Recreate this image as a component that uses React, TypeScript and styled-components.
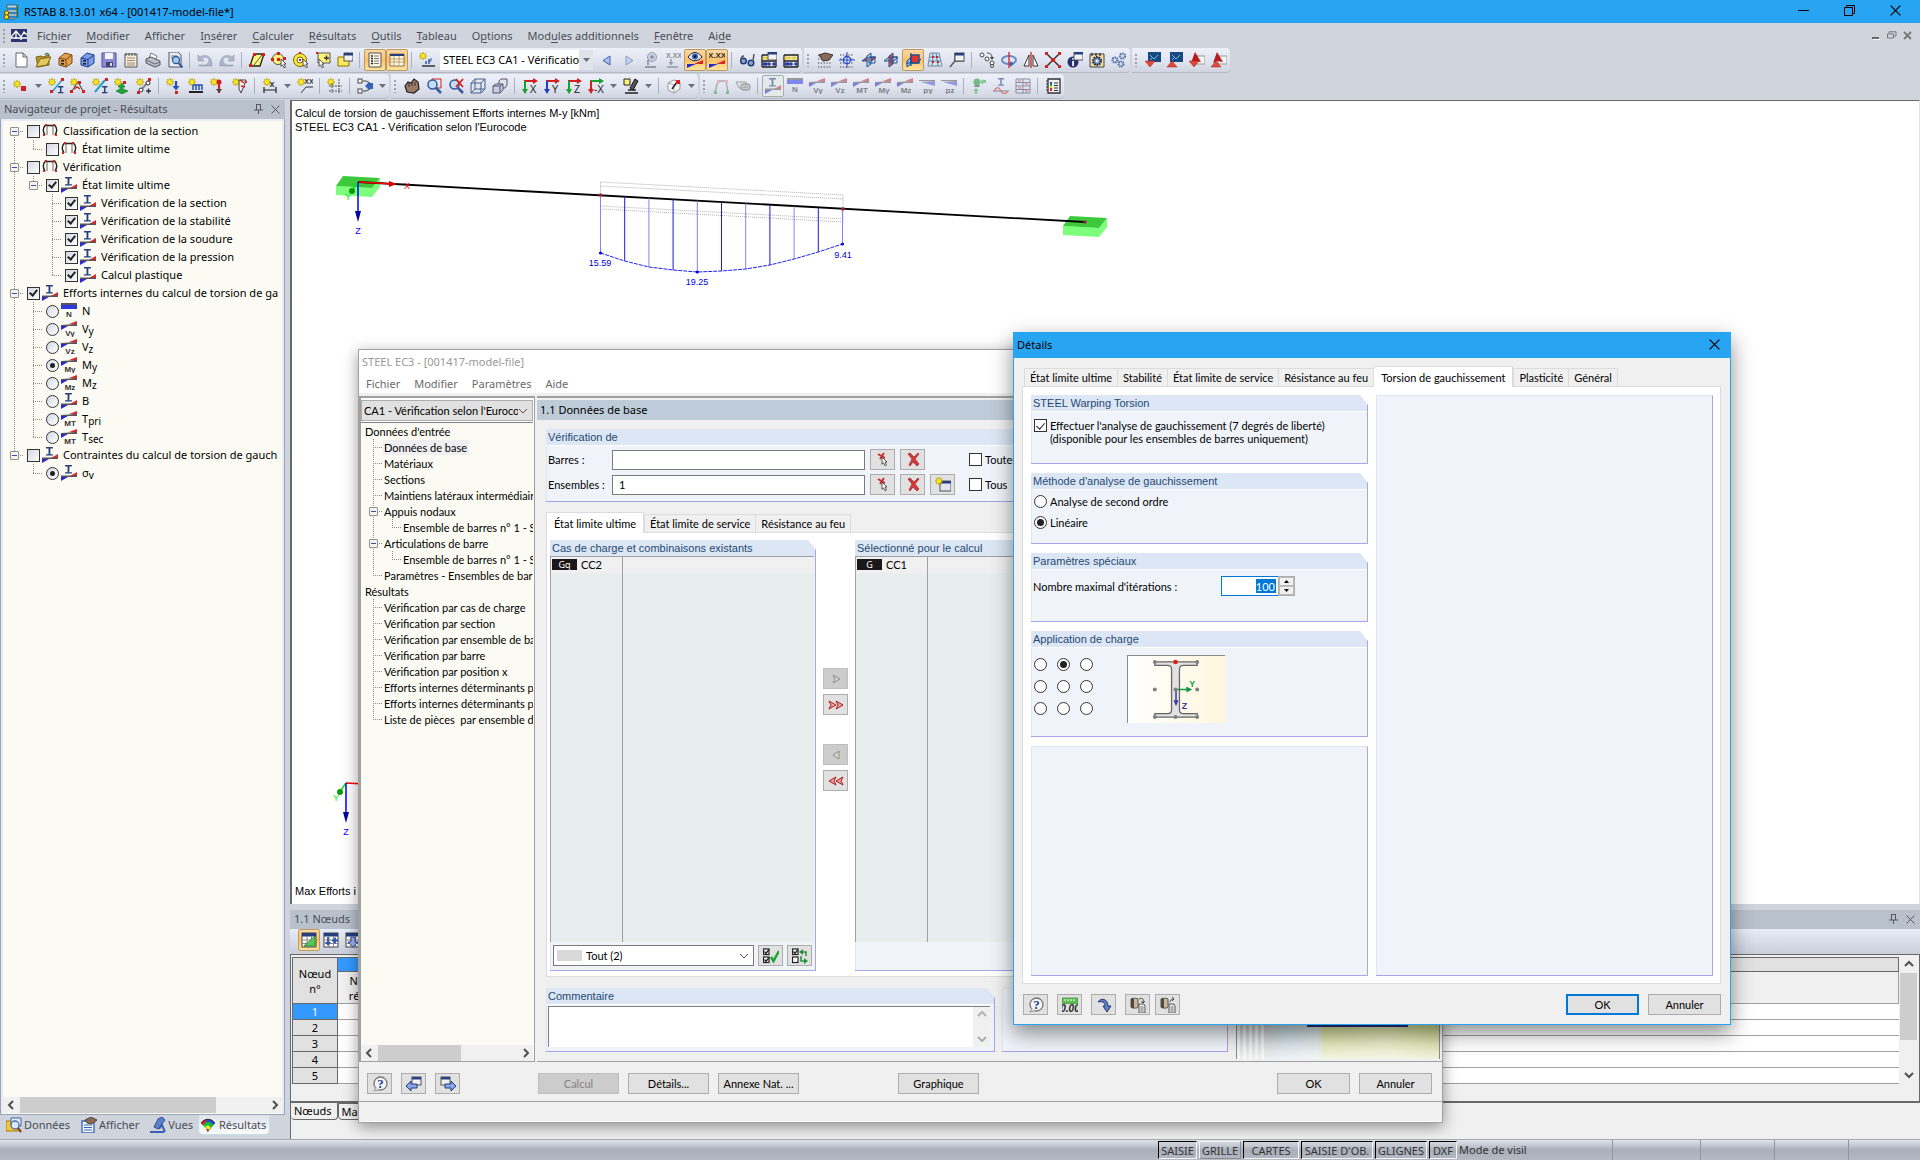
import React, { ReactNode } from "react";
import styled, { createGlobalStyle, css } from "styled-components";

const UI = `"Noto Sans", "Open Sans", sans-serif`;
const DLG = `Lato, Roboto, sans-serif`;
const ARIAL = `"Liberation Sans", Arial, sans-serif`;

const Global = createGlobalStyle`
  *, *::before, *::after { box-sizing: border-box; }
  html, body { margin: 0; height: 100%; overflow: hidden; }
  body { font: 11px/16px ${UI}; color: #000; background: #cfd4dd; }
  button, input, select, textarea { font: inherit; color: inherit; margin: 0; padding: 0; border-radius: 0; }
  ul { list-style: none; margin: 0; padding: 0; }
  p, h1, h2, h3 { margin: 0; font-size: inherit; font-weight: inherit; }
`;

/* ---------- icons ---------- */

const burst = (x: number, y: number, r = 4) => {
  const pts: string[] = [];
  for (let i = 0; i < 16; i++) {
    const k = i % 2 ? r * 0.5 : r;
    const a = (i * Math.PI) / 8;
    pts.push(`${(x + k * Math.cos(a)).toFixed(2)},${(y + k * Math.sin(a)).toFixed(2)}`);
  }
  return <polygon points={pts.join(" ")} fill="#ffee1e" stroke="#b59a00" strokeWidth="0.6" />;
};
const red = "#d42020";
const navy = "#26407e";
const dot = (x: number, y: number, c = red, s = 3) => <rect x={x} y={y} width={s} height={s} fill={c} />;
const line = (d: string, c = "#333", w = 1.3) => <path d={d} fill="none" stroke={c} strokeWidth={w} />;
const cursor = (x: number, y: number) => (
  <path d={`M${x} ${y}l5 5h-2l1.500 3-1.500 .8-1.500-3-1.500 1.500z`} fill="#fff" stroke="#444" strokeWidth="0.9" />
);
const ibeam = (x: number, y: number, s = 1) => (
  <path d={`M${x} ${y}h${6 * s}v1.400h-${2.2 * s}v${5 * s}h${2.2 * s}v1.400h-${6 * s}v-1.400h${2.2 * s}v-${5 * s}h-${2.2 * s}z`} fill={navy} />
);
const label = (t: string, x = 9, y = 15, size = 8) => (
  <text x={x} y={y} fontSize={size} fontFamily="Liberation Sans, sans-serif" fontWeight="700" textAnchor="middle" fill="#333">{t}</text>
);
const wedge = (
  <>
    <path d="M8 3L16 0v4z" fill="#d8282c" />
    <path d="M0 4l16-1v2H0z" fill="#5a5458" />
    <path d="M0 5h7L0 9z" fill="#2a2ad0" />
  </>
);
const force = (t: string) => <>{wedge}{label(t)}</>;
const beamResult = <>{ibeam(4, 0, 1.15)}<path d="M9 11l7-4v4z" fill="#d8282c" /><path d="M0 10.500h16V12H0z" fill="#5a5458" /><path d="M0 12h7l-7 4z" fill="#2a2ad0" /></>;
const drawer = (c: string, d: string) => (
  <><path d="M2 6l6-5 7 2v8l-6 4-7-2z" fill={c} stroke={d} /><path d="M2 6l7 1.500 6-4.500M9 7.500V15" fill="none" stroke={d} /><rect x="4" y="8" width="3" height="1.600" fill="#222" /><rect x="4" y="11" width="3" height="1.600" fill="#222" /></>
);
const planes = (a: string, b: string) => (
  <><path d="M1 9l5-4h9l-4 4z" fill={a} stroke="#23508c" /><path d="M6 4l4-3v11l-4 3z" fill={b} fillOpacity=".85" stroke="#23508c" /><path d="M8 5h6v6H8z" fill="none" stroke="#23508c" /></>
);
const axes = (t: string, a: string, b: string) => (
  <>{line("M2 3h10", a, 2)}<path d="M11 0l5 3-5 3z" fill={a} />{line("M3 3v9", b, 2)}<path d="M0 11l3 5 3-5z" fill={b} />
    <text x="11" y="15" fontSize="10" textAnchor="middle" fontFamily="Liberation Sans, sans-serif" fill="#222">{t}</text></>
);
const dots = <path d="M1 3h14M1 7h14M1 11h14M1 15h14" stroke="#444" strokeWidth="1.2" strokeDasharray="1.300 1.500" />;
const abacus = <><path d="M1 3h14v12M1 3v12M1 9h14M1 15h14" fill="none" stroke="#222" strokeWidth="1.3" /><g fill="#e8d020">{[3, 6, 10, 12].map((x) => <circle key={x} cx={x} cy="6" r="1.6" />)}</g><g fill="#2c3c9c">{[3, 5, 8, 13].map((x) => <circle key={x} cx={x} cy="12" r="1.8" />)}</g></>;
const supports = <>{line("M3 12C1 9 1 5 3 2.500h10c2 2.500 2 6.500 0 9.500", "#222", 1.400)}{line("M5 3v9M11 3v9", "#666", 1)}{dot(3, 1, red, 2)}{dot(11, 1, red, 2)}{dot(1, 11, red, 2)}{dot(13, 11, red, 2)}</>;
const question = <><circle cx="8.500" cy="7.500" r="6.500" fill="#f4f4f6" stroke="#777" strokeWidth="1.300" /><path d="M4 11l-2 4 6-1.500" fill="#ddd" stroke="#888" strokeWidth=".8" /><text x="8.500" y="12" fontSize="13" fontWeight="700" textAnchor="middle" fontFamily="Liberation Serif, serif" fill="#24408c">?</text></>;
const grid = <><rect x="1" y="1" width="14" height="14" fill="#fff" stroke="#444" /><rect x="1" y="1" width="14" height="3.500" fill={navy} /><path d="M1 8h14M1 11.500h14M6 4v11M10.500 4v11" stroke="#888" /></>;
const cad = (up: boolean) => <><rect x="3" y="0" width="13" height="10" fill="#164a80" /><path d="M5 3l4 4 4-4M5 8l3-3" stroke="#7cc0f0" fill="none" /><path d={up ? "M0 15l5-6 5 6z" : "M0 9h10l-5 6z"} fill="#e0483c" stroke="#a02020" strokeWidth=".5" /></>;
const scia = (up: boolean) => <><path d="M7 4h9v8H7z" fill="#f4f4f4" stroke="#999" /><path d="M6 0l6 10-6-1-4 2z" fill="#b81c1c" /><path d={up ? "M0 15l5-6 5 6z" : "M0 9h10l-5 6z"} fill="#e0483c" stroke="#a02020" strokeWidth=".5" /></>;
const winIcon = (x: number, y: number) => <><rect x={x} y={y} width="9" height="8" fill="#f2f2f4" stroke="#555" /><rect x={x} y={y} width="9" height="2.500" fill={navy} /></>;
const jar = (up: boolean) => <><path d="M1 2c0-1 7-1 7 0v8c0 1.500-7 1.500-7 0z" fill="#c8b89c" stroke="#5a5048" /><path d="M1 2c0-1 3-1 3 0v9c-1 0-3 0-3-1z" fill="#54483e" /><path d="M9 7h5l1 2v7H9z" fill="#eee" stroke="#555" /><path d="M10.500 10h3M10.500 12h3M10.500 14h3" stroke="#666" />{line(up ? "M10 5c0-3 4-3 4-3M12 0l2 2-2 2" : "M9 2c4-2 5 1 4 4M11 4l2 2 2-2", "#444", 1)}</>;

const ICONS: Record<string, ReactNode> = {
  new: <path d="M3 1h7l4 4v10H3zM10 1v4h4" fill="#fff" stroke="#666" />,
  open: <><path d="M1 5l5-1 2 1 6-2v10L3 15z" fill="#b8952c" stroke="#7c6414" /><path d="M1 15l4-8 11-2-4 8z" fill="#e4c860" stroke="#7c6414" />{line("M10 3c1-2 3-2 4 0", "#3a7a3a")}</>,
  "open-model": drawer("#e0a050", "#7a4a10"),
  "save-model": drawer("#7c9ce8", "#203c90"),
  save: <><path d="M1 1h14v14H1z" fill="#8c8cd4" stroke="#50509c" /><path d="M4 1h8v6H4z" fill="#f4f4f8" /><path d="M5 10h7v5H5z" fill="#444470" /><rect x="9" y="11" width="2" height="3" fill="#ddd" /></>,
  report: <><path d="M2 2h12v13H2z" fill="#f4f0e0" stroke="#555" />{line("M3 1v3M6 1v3M9 1v3M12 1v3", "#555", 1)}{line("M4 6h8M4 8.500h8M4 11h8M4 13h8", "#a08868", 1)}</>,
  print: <><path d="M4 6l2-5 6 3-2 5z" fill="#fff" stroke="#777" /><path d="M1 7l5-2 9 4v4l-5 2-9-4z" fill="#b8c0cc" stroke="#555" /><path d="M1 8l9 4 5-2" fill="none" stroke="#666" /></>,
  preview: <><path d="M2 0h9l3 3v12H2z" fill="#e8ecf4" stroke="#555" />{line("M4 4h6M4 6h3", "#777", 1)}<circle cx="9" cy="8" r="3.500" fill="#a8ccf0" stroke="#345a9c" strokeWidth="1.300" />{line("M11.500 11l4 4.500", "#345a9c", 2)}</>,
  undo: <g opacity=".6"><path d="M1 3v6h6L5 7c3-3 7-2 7 1 0 2-1 3-3 5h-7v1h13c1-9-6-13-12-9z" fill="#8c9ab4" stroke="#5c6c88" strokeWidth=".6" /></g>,
  redo: <g opacity=".6"><path d="M15 3v6H9l2-2C8 4 4 5 4 8c0 2 1 3 3 5h7v1H1C0 5 7 1 13 5z" fill="#8c9ab4" stroke="#5c6c88" strokeWidth=".6" /></g>,
  "sel-rhomb": <><path d="M5 2h10l-4 12H1z" fill="#fff27a" stroke="#222" strokeWidth="1.300" />{line("M5 13L13 3", "#555", 1)}{dot(4, 1)}{dot(13, 1)}{dot(0, 12)}</>,
  "sel-circle": <><circle cx="7" cy="7" r="5.500" fill="#fff27a" stroke="#555" />{dot(6, 0)}{dot(0, 6)}{dot(12, 5)}{dot(6, 6)}{cursor(10, 7)}</>,
  "sel-ring": <><circle cx="7" cy="8" r="6.500" fill="#ffe838" stroke="#7a6a00" /><circle cx="7" cy="8" r="3" fill="#fff" stroke="#7a6a00" />{dot(6, 7, red, 2)}{dot(6, 0, red, 2)}{cursor(10, 7)}</>,
  "sel-rect": <><path d="M3 1h12v10H3z" fill="#fff27a" stroke="#555" />{dot(1, 0, red, 2)}{line("M9 6h5M11.500 3.500v5", "#333")}{cursor(4, 7)}</>,
  "sel-win": <><path d="M1 5h11v9H1z" fill="#ffe95c" stroke="#8a7800" />{winIcon(7, 1)}</>,
  list: <><path d="M2 1h12v14H2z" fill="#fdf6e4" stroke="#555" />{line("M4 4h2M4 6.500h2M4 9h2M4 11.500h2", "#222", 1.500)}{line("M7 4h5M7 6.500h5M7 9h5M7 11.500h5", "#777", 1)}</>,
  table: <><path d="M1 2h14v12H1z" fill="#fff8ea" stroke="#8c7448" /><path d="M1 2h14v2H1z" fill={navy} />{line("M1 7h14M1 10h14M5 4v10M10 4v10", "#c09c60", 1)}</>,
  "new-load": <>{burst(4, 4)}{line("M10 7v5M7 9v3", "#3a5aa8", 1.500)}{line("M12 6v3h-3", "#3a5aa8", 1)}{line("M3 14h13", "#333", 1.500)}</>,
  prev: <path d="M11 4v9L4 8.500z" fill="#a8c0ec" stroke="#4460a8" />,
  next: <path d="M5 4v9l7-4.500z" fill="#c4d4f0" stroke="#8c9cc8" />,
  "eye-gray": <g opacity=".5"><circle cx="9" cy="5" r="4.500" fill="#a8b8d8" stroke="#556" /><circle cx="9" cy="5" r="1.800" fill="#334" />{line("M5 8v5M2 15h11", "#556", 2)}</g>,
  "xxx-gray": <g opacity=".5">{label("X.XX", 9, 6, 7)}{line("M6 7v5M2 15h11", "#556", 1.500)}<path d="M3.500 10h5L6 13.500z" fill="#556" /></g>,
  eye: <><path d="M1 5c4-6 10-6 14 0-4 5-10 5-14 0z" fill="#dce8f8" stroke="#223" /><circle cx="8" cy="4.500" r="3" fill="#345cb0" /><circle cx="8" cy="4.500" r="1.200" fill="#111" /><path d="M7 12l9-4v4z" fill="#d8282c" /><path d="M0 12h9l-9 4z" fill="#2a2ad0" /></>,
  xxx: <>{label("X.XX", 8, 6, 8)}<path d="M7 12l9-4v4z" fill="#d8282c" /><path d="M0 12h9l-9 4z" fill="#2a2ad0" /></>,
  glasses: <><circle cx="4.500" cy="9" r="2.800" fill="#8ca4d4" stroke="#223a78" strokeWidth="1.500" /><circle cx="12" cy="11" r="2.800" fill="#8ca4d4" stroke="#223a78" strokeWidth="1.500" />{line("M2 8c0-3 1-4 3-4M14 9l1-7", "#556", 1.500)}</>,
  "abacus-win": <>{abacus}{winIcon(7, 0)}</>,
  abacus,
  "hand-grid": <>{dots}<path d="M2 3l6-2 8 2-4 5-6 1z" fill="#8c6a58" stroke="#333" /></>,
  snap: <>{dots}<circle cx="8" cy="8" r="3.500" fill="#e8ecf8" stroke="#2a4ac0" strokeWidth="1.300" />{line("M8 0v16M0 8h16", "#2a4ac0", 1)}</>,
  "plane-xy": planes("#e04040", "#a8d0f0"),
  "plane-yz": planes("#a8d0f0", "#e04040"),
  "plane-xz": <><path d="M2 9l4-4v7l-4 3z" fill="#7cc0f0" stroke="#23508c" /><path d="M6 3h8v8H6z" fill="#e83030" stroke="#23508c" strokeWidth="1.500" /><path d="M1 11h11l4-4M6 1v13" fill="none" stroke="#23508c" strokeWidth="1.200" /></>,
  mesh: <><path d="M3 1h9l3 13H1z" fill="#cfe4f4" stroke="#7a8a98" />{line("M2 5h11M2 9h12M6 1L5 14M9 1l2 13", "#5a88a8", 1)}{dot(5, 4, red, 2)}{dot(9, 4, red, 2)}{dot(5, 9, red, 2)}{dot(10, 9, red, 2)}</>,
  "axis-win": <>{line("M1 15l5-6V1M6 9h9", "#556", 1.500)}{winIcon(6, 1)}</>,
  move: <><circle cx="3" cy="3" r="2" fill="#fff" stroke="#444" /><circle cx="8" cy="7" r="2" fill="#fff" stroke="#444" />{line("M8 1c4 0 5 2 5 5", "#444", 1)}<path d="M11 5h4l-2 3z" fill="#444" /><circle cx="13" cy="11" r="2" fill="#fff" stroke="#444" /><circle cx="13" cy="14" r="1.500" fill="#fff" stroke="#444" /></>,
  rotate: <><ellipse cx="8" cy="8" rx="7" ry="4" fill="none" stroke="#6c88c8" strokeWidth="2" />{line("M8 0v16", red, 1.300)}<path d="M9 9l4 3-4 3z" fill="#4464b0" /></>,
  mirror: <><path d="M6 3v11H1zM10 3v11h5z" fill="#fff" stroke="#333" />{line("M8 0v16", red, 1.300)}</>,
  cross: <>{line("M2 2l12 12M14 2L2 14", "#333", 1.500)}{dot(0, 0)}{dot(13, 0)}{dot(0, 13)}{dot(13, 13)}{dot(6, 6, red, 4)}</>,
  info: <><circle cx="6" cy="10" r="5.500" fill="#26306c" /><path d="M5.200 9h1.800v5H5.200zM5.200 6h1.800v1.800H5.200z" fill="#fff" />{winIcon(7, 0)}</>,
  settings: <><path d="M1 2h14v13H1z" fill="#f0dca8" stroke="#444" />{line("M3 1v3M7 1v3M11 1v3", "#333")}<circle cx="8" cy="9" r="4" fill="#6484b4" stroke="#223" strokeDasharray="1.500 1" strokeWidth="2" /><circle cx="8" cy="9" r="1.500" fill="#fff" /></>,
  gears: <g fill="none" stroke="#5070a8" strokeWidth="2.200" strokeDasharray="1.500 .7"><circle cx="4" cy="8" r="2.500" /><circle cx="11.500" cy="4" r="2.500" /><circle cx="10" cy="12" r="2.500" /></g>,
  "cad-in": cad(false), "cad-out": cad(true), "scia-in": scia(false), "scia-out": scia(true),
  node: <>{burst(4, 6)}{dot(8, 8, red, 5)}</>,
  member: <>{line("M4 14L14 2", "#26a0c8", 1.500)}{burst(4, 4)}{dot(2, 12)}{dot(13, 0)}{ibeam(10, 8, 0.9)}</>,
  "member-set": <>{line("M2 13L8 4l5 9", "#555", 1.200)}{burst(4, 4)}{dot(8, 3)}{dot(0, 12)}{dot(12, 12)}{line("M4 11l3-2 3 2", red, 1.500)}</>,
  "member-i": <>{line("M3 14L13 2", "#26a0c8", 2)}{burst(4, 4)}{dot(13, 0)}{ibeam(10, 8, 0.9)}</>,
  support: <><path d="M8 5l3 4H9v2l5 2-6 3-6-3 4-2V9H4z" fill="#1ca838" stroke="#0c6c20" strokeWidth=".6" />{burst(4, 4)}{dot(9, 3)}</>,
  release: <>{line("M4 13L13 3", "#888", 2)}{burst(4, 4)}<circle cx="12" cy="5" r="2" fill="#fff" stroke="#333" /><circle cx="5" cy="12" r="2" fill="#fff" stroke="#333" />{line("M10 13h5M12.500 10.500v5", "#333")}{dot(12, 0)}{dot(1, 13)}</>,
  "load-node": <>{burst(4, 4)}{line("M10 3v6", "#2850b0", 2.200)}<path d="M6.500 8h7L10 12.500z" fill="#2850b0" />{dot(9, 13)}</>,
  "load-mem": <>{burst(4, 4)}{line("M5 7h9v5M8 7v5M11 7v5M5 7v5", "#2850b0", 1.500)}{line("M1 14h14", "#222", 2)}</>,
  "load-imp": <>{burst(4, 4)}<circle cx="9" cy="4" r="2.500" fill={red} />{line("M9 6v9", red, 2.200)}<path d="M6 11h6l-3 4z" fill="#444" /></>,
  "load-def": <>{burst(4, 4)}<path d="M7 2h7l-2 6-3 7-2-4z" fill="#eee" stroke="#444" />{line("M8 2l4 3M9 8l4 1", red, 1.500)}{dot(13, 3, red, 2)}</>,
  dim: <>{burst(5, 4)}{line("M2 9v6M14 9v6M2 12h12", "#222", 1.200)}{label("x", 10, 9, 9)}</>,
  comment: <>{burst(4, 4)}{label("XX", 12, 6, 7)}{line("M4 15L9 9h7", "#333", 1)}</>,
  guide: <>{burst(4, 4)}<path d="M5 5v10M12 1v14M2 8h13M2 13h13" stroke="#555" strokeWidth="1" strokeDasharray="2 1" /></>,
  select: <><rect x="1" y="1" width="4" height="4" fill="#fff" stroke="#444" /><rect x="1" y="11" width="4" height="4" fill="#fff" stroke="#444" />{line("M6 3h3l4 2M6 13h3l4-2", "#444", 1)}<path d="M8 8l4-4v8z" fill="#3464b8" /><rect x="12" y="5" width="4" height="6" fill="#3464b8" /></>,
  pan: <><path d="M3 14l-2-6 3-4 3 1 3-4 4 3 1 7-5 4z" fill="#9c7c68" stroke="#222" strokeWidth="1.200" />{line("M5 5v4M8 4v4M11 4v4", "#333", 1)}</>,
  zoom: <><path d="M6 1h9v9H6z" fill="none" stroke={red} /><circle cx="6.500" cy="6.500" r="4.500" fill="#c4dcf4" stroke="#345a9c" strokeWidth="1.500" />{line("M10 10l5 5", "#345a9c", 2.500)}</>,
  "zoom-x": <><circle cx="6.500" cy="6.500" r="4.500" fill="#c4dcf4" stroke="#345a9c" strokeWidth="1.500" />{line("M10 10l5 5", "#345a9c", 2.500)}{line("M8 1l7 8M15 1L8 9", red, 1.800)}</>,
  cube: <path d="M1 5h10v10H1zM1 5l4-4h10l-4 4M15 1v10l-4 4M5 1v10h10M5 11l-4 4" fill="#dce4f4" fillOpacity=".4" stroke="#4a6088" />,
  boxes: <><path d="M7 3l2-2h6v6l-2 3H7z" fill="#dce4f0" stroke="#556" /><path d="M1 8l3-2h7v6l-3 3H1z" fill="#c4d0e4" stroke="#556" /><path d="M1 8h7v7M8 8l3-2" fill="none" stroke="#556" /></>,
  "ax-x": axes("X", "#d02020", "#18a030"), "ax-y": axes("Y", "#d02020", "#2040c0"), "ax-z": axes("Z", "#d02020", "#18a030"), "ax-mx": axes("-X", "#18a030", "#d02020"),
  render: <><path d="M1 1h6v6H1z" fill="#fff27a" stroke="#222" />{line("M2 15h13M5 12h8", "#222", 1.500)}<path d="M12 1l3 2-5 9-3-2z" fill="#555" stroke="#111" /></>,
  clip: <><path d="M2 5l6-3 6 2v7l-6 4-6-3z" fill="#f4f4fa" stroke="#999" /><path d="M2 5l6 2 6-3M8 7v8" fill="none" stroke="#aaa" />{line("M6 11l5-7", "#222", 1.500)}{dot(10, 2, red, 4)}</>,
  deform: <>{line("M2 14L5 3h8l2 11", "#777", 1.300)}{dot(4, 2, "#e09090")}{dot(12, 2, "#e09090")}{dot(1, 13, "#40a850")}{dot(13, 13, "#40a850")}</>,
  roll: <g opacity=".6"><path d="M1 4h10v6H4z" fill="#ddd" stroke="#777" /><rect x="6" y="6" width="9" height="6" rx="2" fill="#bbb" stroke="#555" />{line("M8 9h5", "#666", 1)}</g>,
  beam: beamResult,
  N: <><rect x="0" y="0" width="16" height="2" fill="#5a5458" /><rect x="0" y="2" width="16" height="4" fill="#3038e0" />{label("N", 8, 14)}</>,
  Vy: force("Vy"), Vz: force("Vz"), MT: force("MT"), My: force("My"), Mz: force("Mz"),
  py: <><path d="M0 2h16v2L0 3z" fill="#5a5458" /><path d="M2 4h14v4z" fill="#5058e0" />{label("py")}</>,
  pz: <><path d="M0 2h16v2L0 3z" fill="#5a5458" /><path d="M2 4h14v4z" fill="#5058e0" />{label("pz")}</>,
  reaction: <g opacity=".6"><circle cx="6" cy="4" r="3.500" fill="#28a040" /><path d="M4 7h4l1 2H3z" fill="#555" /><path d="M15 2v3h-3v2L9 4l3-3v1zM4 16v-3H2l3-3 3 3H6v3z" fill="#4cb860" /></g>,
  section: <>{ibeam(5, 0)}{line("M0 13h16", "#444", 1)}{line("M1 13c3-5 5-4 7 0s5 3 7 0", red, 1.200)}</>,
  values: <g opacity=".6"><path d="M1 1h14v14H1z" fill="#dce4f4" stroke="#556" />{line("M1 4.500h14M1 8h14M1 11.500h14M8 1v14", "#556", 1)}{line("M3 3h3M10 6h3M3 10h3M10 13h3", red, 1.200)}</g>,
  panel: <><path d="M3 1h12v14H3z" fill="#f0f0f0" stroke="#333" strokeWidth="1.300" /><path d="M1 3h2M1 6h2M1 9h2M1 12h2" stroke="#333" /><path d="M5 4h2v2H5z" fill="#2040d0" /><path d="M5 6h2v2H5z" fill="#18b040" /><path d="M5 8h2v2H5z" fill="#f0d820" /><path d="M5 10h2v3H5z" fill="#e02020" />{line("M9 5h4M9 7.500h4M9 10h4M9 12.500h4", "#333", 1)}</>,
  supports,
  data: <><path d="M0 4h6l1 2h5v8H0z" fill="#f4c838" stroke="#a07c10" /><path d="M5 1h10v8H5z" fill="#e4ecf8" stroke="#3c64b0" /><circle cx="9" cy="8" r="4" fill="#d8ecfc" stroke="#4c6ca0" strokeWidth="1.300" />{line("M12 11l3 4", "#7a4a28", 2.200)}</>,
  display: <><path d="M1 4h12v12H1z" fill="#f4f8ff" stroke="#3464b8" strokeWidth="1.300" />{line("M3 8h8M3 10.500h8M3 13h8", "#3464b8", 1)}<path d="M4 3l6-3 6 3-5 4-5-1z" fill="#8c6a50" stroke="#333" strokeWidth=".8" /></>,
  views: <><path d="M8 2l4-2 3 3-7 9-4-2z" fill="#5c80cc" stroke="#2c4c94" />{line("M0 15h14M9 12l3-4 3 7", "#3c60b0", 2)}</>,
  results: <><path d="M0 6c4-6 12-6 16 0l-8 10c-1 0-1-2-2-4z" fill="#18b838" /><path d="M0 6c4-6 12-6 16 0l-2 2C11 3 5 3 2 8z" fill="#2048e0" /><path d="M0 6c2-3 4-4 7-4L5 5C4 6 3 7 2 8z" fill="#e02020" /><path d="M5 10c2-2 4-2 6 1l-2 3H7z" fill="#f8e820" /><path d="M6 13c1-1 2-1 3 0l-1 3z" fill="#e02020" /><path d="M0 6c4-6 12-6 16 0" fill="none" stroke="#222" /></>,
  "t-edit": <>{grid}<path d="M3 14L14 4v10z" fill="#58c858" stroke="#187818" strokeOpacity=".7" /></>,
  "t-plus": <>{grid}{line("M5 5v7M9 8.500h6M12 5.500v6", "#3050a8", 1.800)}<path d="M2 10h6l-3 4z" fill="#3050a8" /></>,
  "t-down": <>{grid}<path d="M6 5h4v5h3l-5 5-5-5h3z" fill="#9cb4e8" stroke="#3050a8" /></>,
  question,
  "win-prev": <>{winIcon(6, 1)}<path d="M0 10l5-5v3h6v4H5v3z" fill="#88a8e8" stroke="#223c80" /></>,
  "win-next": <>{winIcon(1, 1)}<path d="M16 10l-5-5v3H5v4h6v3z" fill="#88a8e8" stroke="#223c80" /></>,
  pick: <>{line("M3 2l7 4M9 1L5 7", "#c83030", 2)}{cursor(7, 5)}</>,
  del: <path d="M3 2l2-1 4 4 4-4 1 1-4 5 4 5-2 2-4-4-3 4-1-1 3-6z" fill="#d83838" stroke="#8c1818" strokeWidth=".6" />,
  "new-win": <><rect x="5" y="4" width="11" height="10" fill="#e4e4ee" stroke="#555" /><rect x="5" y="4" width="11" height="2.500" fill={navy} />{burst(4, 4)}</>,
  right: <path d="M5 4l7 4-7 4 2-4z" fill="#d4d8cc" stroke="#8c9084" />,
  left: <path d="M11 4L5 8l6 4z" fill="#d4d8cc" stroke="#8c9084" />,
  rights: <path d="M1 4l7 4-7 4 2-4zM8 4l7 4-7 4 2-4z" fill="#f4a0a0" stroke="#a81c1c" />,
  lefts: <path d="M8 4L1 8l7 4-2-4zM15 4L8 8l7 4-2-4z" fill="#f4a0a0" stroke="#a81c1c" />,
  "check-all": <>{[1, 9].map((y) => <g key={y}><rect x="0.500" y={y} width="5.500" height="5.500" fill="#fff" stroke="#222" strokeWidth="1.200" />{line(`M1.500 ${y + 2.5}l1.500 2 3-4`, "#222")}</g>)}{line("M8 9l2.500 4L16 3", "#18a830", 2.500)}</>,
  "check-inv": <>{[1, 9].map((y) => <rect key={y} x="0.500" y={y} width="5.500" height="5.500" fill="#fff" stroke="#222" strokeWidth="1.200" />)}{line("M1.500 3.500l1.500 2 3-4", "#222")}{line("M14 8V4H10M9 8v5h4", "#28903c", 1.500)}<path d="M11 1v6L7 4zM12 10v6l4-3z" fill="#28903c" /></>,
  units: <><rect x="0" y="1" width="16" height="5.500" fill="#5cc050" stroke="#2c7c28" strokeWidth=".6" />{line("M3 2v2M6 2v2M9 2v2M12 2v2", "#fff", 1)}<text x="8" y="15" fontSize="10" fontStyle="italic" fontWeight="700" textAnchor="middle" fontFamily="Liberation Sans, sans-serif" fill="#222">0.00</text></>,
  reset: <path d="M2 5c3-5 10-3 10 4h3l-4 6-4-6h2c0-4-3-5-7-4z" fill="#5c80c8" stroke="#24386c" />,
  "jar-load": jar(false),
  "jar-save": jar(true),
  app: <><rect x="4" y="1" width="10" height="3" fill="#b8d8e8" stroke="#345" strokeWidth=".7" /><path d="M4 6h10v2H4zM4 10h10v2H4zM4 14h8v1H4z" fill="#dce8ec" stroke="#345" strokeWidth=".6" />{line("M14.500 1v13", "#2c7040", 1.500)}<circle cx="3.500" cy="9" r="2.200" fill="#ffd818" stroke="#665000" /><circle cx="3.500" cy="13" r="2.300" fill="#ffd818" stroke="#665000" /></>,
  doc: <><rect width="16" height="13" y="1" fill="#2c3474" /><path d="M0 10h16M0 9l5-6 5 6 3-5 3 3M5 3v8M10 9v3" stroke="#fff" strokeWidth="1.300" fill="none" /></>,
};

const Svg = styled.svg<{ $dim?: boolean }>`
  display: block;
  flex: none;
  opacity: ${(p) => (p.$dim ? 0.55 : 1)};
`;
const Icon = ({ name, dim, size = 16 }: { name: string; dim?: boolean; size?: number }) => (
  <Svg width={size} height={size} viewBox="0 0 16 16" $dim={dim} aria-hidden="true">{ICONS[name]}</Svg>
);

/* ---------- shell ---------- */

const Shell = styled.div`
  position: relative;
  height: 100vh;
  display: grid;
  grid-template-rows: 23px 25px 26px 26px minmax(0, 1fr) 21px;
  overflow: hidden;
`;
const TitleBar = styled.header`
  display: flex;
  align-items: center;
  gap: 5px;
  padding: 0 17px 0 3px;
  background: #27a4f2;
`;
const Grow = styled.div`flex: 1;`;
const CaptionButton = styled.button`
  border: 0;
  background: none;
  width: 16px;
  height: 16px;
  display: grid;
  place-items: center;
`;
const Captions = styled.div`
  display: flex;
  gap: 30px;
  margin-bottom: 2px;
`;
const MenuBar = styled.nav`
  display: flex;
  align-items: center;
  gap: 1px;
  padding: 0 4px 0 0;
  color: #4a4d55;
`;
const Grip = styled.span`
  width: 10px;
  flex: none;
  align-self: stretch;
  margin: 5px 0;
  background: radial-gradient(circle, #9aa1b0 1px, transparent 1px) 2px 0 / 4px 4px repeat-y;
`;
const MenuItem = styled.button`
  border: 0;
  background: none;
  padding: 0 7px;
  line-height: 16px;
  white-space: nowrap;
  u { text-underline-offset: 2px; }
`;
const MdiControls = styled.div`
  display: flex;
`;

const ToolRow = styled.div`
  display: flex;
  gap: 2px;
`;
const ToolGroup = styled.div`
  display: flex;
  align-items: center;
  height: 25px;
  background: linear-gradient(#edf0f8, #dfe3ee 60%, #cfd4e0);
  border-bottom: 1px solid #b3b9c6;
  border-radius: 0 4px 4px 0;
`;
const ToolButton = styled.button<{ $on?: boolean; $soft?: boolean }>`
  width: 22px;
  height: 22px;
  flex: none;
  display: grid;
  place-items: center;
  border: 1px solid transparent;
  background: none;
  ${(p) => p.$on && css`
    border: 1px solid #c09a5c;
    background: linear-gradient(#fbd9a8, #fbc16c 50%, #fde4a0);
    border-radius: 2px;
  `}
  ${(p) => p.$soft && css`
    border: 1px solid #a4b0ac;
    background: #e4eaea;
    border-radius: 2px;
  `}
`;
const Sep = styled.span`
  width: 8px;
  height: 16px;
  flex: none;
  background: linear-gradient(#a9b0be, #a9b0be) 3px 0 / 1px 100% no-repeat;
`;
const Drop = styled.button`
  width: 13px;
  height: 22px;
  border: 0;
  background: none;
  display: grid;
  place-items: center;
`;
const Caret = () => <Svg width="7" height="4" viewBox="0 0 7 4" aria-hidden="true"><path d="M0 0h7L3.500 4z" fill="#6c7078" /></Svg>;
const ComboWrap = styled.label`
  display: flex;
  width: 153px;
  height: 20px;
  margin: 0 3px 0 2px;
  background: #fff;
  align-items: center;
  padding-left: 3px;
  overflow: hidden;
`;
const BareSelect = styled.select`
  appearance: none;
  border: 0;
  background: transparent;
  flex: 1;
  min-width: 0;
  outline: 0;
`;
const ComboEnd = styled.span`
  width: 14px;
  align-self: stretch;
  background: #dfe3ea;
  display: grid;
  place-items: center;
`;

const DIMMED = new Set(["N", "Vy", "Vz", "MT", "My", "Mz", "py", "pz", "section", "beam", "deform"]);
const Tools = ({ items, dimForces }: { items: string; dimForces?: boolean }) => (
  <ToolGroup role="toolbar">
    <Grip />
    {items.split(" ").map((it, i) => {
      if (it === "|") return <Sep key={i} />;
      if (it === "v") return <Drop key={i} aria-label="plus"><Caret /></Drop>;
      if (it === "combo")
        return (
          <ComboWrap key={i}>
            <BareSelect aria-label="Cas de charge"><option>STEEL EC3 CA1 - Vérificatio</option></BareSelect>
            <ComboEnd><Caret /></ComboEnd>
          </ComboWrap>
        );
      const on = it.startsWith("*");
      const soft = it.startsWith("~");
      const name = it.replace(/^[*~]/, "");
      return (
        <ToolButton key={i} $on={on} $soft={soft} aria-label={name}>
          <Icon name={name} dim={dimForces && DIMMED.has(name)} />
        </ToolButton>
      );
    })}
  </ToolGroup>
);

/* ---------- tree ---------- */

type Guide = "line" | "tee" | "end" | "first" | "none";
const dotV = "repeating-linear-gradient(#8a8a8a 0 1px, transparent 1px 2px)";
const dotH = "repeating-linear-gradient(90deg, #8a8a8a 0 1px, transparent 1px 2px)";
const guideBg: Record<Guide, string> = {
  none: "none",
  line: `${dotV} 9px 0 / 1px 100% no-repeat`,
  tee: `${dotV} 9px 0 / 1px 100% no-repeat, ${dotH} 9px 50% / 10px 1px no-repeat`,
  end: `${dotV} 9px 0 / 1px 50% no-repeat, ${dotH} 9px 50% / 10px 1px no-repeat`,
  first: `${dotV} 9px 100% / 1px 50% no-repeat, ${dotH} 9px 50% / 10px 1px no-repeat`,
};
const GuideCell = styled.span<{ $kind: Guide }>`
  width: 19px;
  align-self: stretch;
  flex: none;
  display: flex;
  align-items: center;
  padding-left: 5px;
  background: ${(p) => guideBg[p.$kind]};
`;
const Expander = styled.button`
  width: 9px;
  height: 9px;
  border: 1px solid #8f8f8f;
  border-radius: 1px;
  background: linear-gradient(#3c50a0, #3c50a0) 1px 3px / 5px 1px no-repeat, #f4f4f4;
`;
const Guides = ({ spec, box }: { spec: Guide[]; box?: boolean }) => (
  <>
    {spec.map((k, i) => (
      <GuideCell key={i} $kind={k}>{box && i === spec.length - 1 && <Expander aria-label="Réduire" />}</GuideCell>
    ))}
  </>
);

const Box = styled.input.attrs({ type: "checkbox" })<{ $nav?: boolean }>`
  appearance: none;
  flex: none;
  width: 13px;
  height: 13px;
  display: grid;
  place-items: center;
  border: 1px solid #333;
  background: ${(p) => (p.$nav ? "linear-gradient(135deg, #d4d8e2, #fdfdfe)" : "#fff")};
  &:checked::after {
    content: "";
    width: 5px;
    height: 8px;
    margin-bottom: 2px;
    border: solid #222;
    border-width: ${(p) => (p.$nav ? "0 2px 2px 0" : "0 1px 1px 0")};
    transform: rotate(40deg);
  }
`;
const Radio = styled.input.attrs({ type: "radio" })<{ $nav?: boolean }>`
  appearance: none;
  flex: none;
  width: 13px;
  height: 13px;
  display: grid;
  place-items: center;
  border: 1px solid #333;
  border-radius: 50%;
  background: ${(p) => (p.$nav ? "linear-gradient(135deg, #d4dae4, #fdfdfe)" : "#fff")};
  &:checked::after {
    content: "";
    width: ${(p) => (p.$nav ? 5 : 7)}px;
    height: ${(p) => (p.$nav ? 5 : 7)}px;
    border-radius: 50%;
    background: #222;
  }
`;

const Work = styled.main`
  display: grid;
  grid-template-columns: 285px minmax(0, 1fr);
  column-gap: 5px;
  min-height: 0;
`;
const Side = styled.aside`
  display: grid;
  grid-template-rows: 19px minmax(0, 1fr) 24px;
  min-height: 0;
`;
const PaneHeader = styled.div`
  display: flex;
  align-items: center;
  gap: 4px;
  padding: 0 3px 1px 4px;
  background: #b9c1cd;
  color: #4a4d55;
`;
const SideTree = styled.div`
  display: flex;
  flex-direction: column;
  min-height: 0;
  border: solid #9ba5b8;
  border-width: 0 1px 1px;
  box-shadow: inset 2px 2px #e8ecf6, inset -2px 0 #e8ecf6;
  background: #fbfbf3;
  padding: 3px 2px 1px;
`;
const TreeList = styled.ul`
  flex: 1;
  min-height: 0;
  overflow: hidden;
  padding-left: 2px;
`;
const NavRow = styled.li`
  display: flex;
  align-items: center;
  height: 18px;
  white-space: nowrap;
  overflow: hidden;
`;
const NavLabel = styled.label`
  display: flex;
  align-items: center;
  margin-left: 3px;
  svg { margin: 0 5px 0 2px; }
`;
const Sub = styled.sub`
  font-size: 10px;
  line-height: 10px;
  vertical-align: -2px;
`;
const ScrollBar = styled.div<{ $v?: boolean }>`
  display: flex;
  flex-direction: ${(p) => (p.$v ? "column" : "row")};
  ${(p) => (p.$v ? "width: 17px" : "height: 16px")};
  flex: none;
  background: #f0f0f0;
`;
const ScrollBtn = styled.button<{ $dim?: boolean }>`
  border: 0;
  background: none;
  width: 17px;
  height: 16px;
  display: grid;
  place-items: center;
  opacity: ${(p) => (p.$dim ? 0.4 : 1)};
`;
const Thumb = styled.div<{ $size: number }>`
  background: #cdcdcd;
  flex: 0 0 ${(p) => p.$size}%;
`;
const Track = styled.div<{ $v?: boolean }>`
  flex: 1;
  display: flex;
  flex-direction: ${(p) => (p.$v ? "column" : "row")};
`;
const chev: Record<string, string> = { l: "M6 1L2 5l4 4", r: "M4 1l4 4-4 4", u: "M1 6l4-4 4 4", d: "M1 3l4 4 4-4" };
const Chevron = ({ dir, w = 2 }: { dir: string; w?: number }) => (
  <Svg width="10" height="10" viewBox="0 0 10 10" aria-hidden="true"><path d={chev[dir]} fill="none" stroke="#505050" strokeWidth={w} /></Svg>
);
const Scroll = ({ v, thumb, dim }: { v?: boolean; thumb: number; dim?: boolean }) => (
  <ScrollBar $v={v}>
    <ScrollBtn $dim={dim} aria-label="Reculer"><Chevron dir={v ? "u" : "l"} /></ScrollBtn>
    <Track $v={v}>{thumb > 0 && <Thumb $size={thumb} />}</Track>
    <ScrollBtn $dim={dim} aria-label="Avancer"><Chevron dir={v ? "d" : "r"} /></ScrollBtn>
  </ScrollBar>
);
const SideTabs = styled.div`
  display: flex;
  align-items: flex-start;
  color: #4a4d55;
`;
const SideTab = styled.button<{ $on?: boolean }>`
  display: flex;
  align-items: center;
  gap: 2px;
  height: 20px;
  padding: 0 4px 0 5px;
  border: 1px solid transparent;
  border-width: 0 1px 1px;
  background: none;
  ${(p) => p.$on && css`
    padding: 0 3px 0 2px;
    gap: 4px;
    background: linear-gradient(#dfe4ec, #fafafa);
    border-color: #bfe0e4;
    border-radius: 0 0 5px 5px;
  `}
`;
const Pin = () => <Svg width="9" height="10" viewBox="0 0 9 10" aria-hidden="true"><path d="M2.500 0v6M6.500 0v6M2.500 .5h4M0 6h9M4.500 6v4" fill="none" stroke="#55595f" /></Svg>;
const Cross = ({ c = "#55595f", s = 9 }: { c?: string; s?: number }) => <Svg width={s} height={s} viewBox="0 0 9 9" aria-hidden="true"><path d="M.5 .5l8 8M8.500 .5l-8 8" stroke={c} /></Svg>;
const PlainBtn = styled.button`
  border: 0;
  background: none;
  width: 13px;
  height: 14px;
  display: grid;
  place-items: center;
`;

type NavItem = { g: Guide[]; box?: boolean; t: "c" | "r"; on?: boolean; ic: string; text: ReactNode; k: string };
const lower = (a: string, b: string) => <span>{a}<Sub>{b}</Sub></span>;
const NAV: NavItem[] = [
  { k: "a", g: ["first"], box: true, t: "c", ic: "supports", text: "Classification de la section" },
  { k: "b", g: ["line", "end"], t: "c", ic: "supports", text: "État limite ultime" },
  { k: "c", g: ["tee"], box: true, t: "c", ic: "supports", text: "Vérification" },
  { k: "d", g: ["line", "end"], box: true, t: "c", on: true, ic: "beam", text: "État limite ultime" },
  { k: "e", g: ["line", "none", "tee"], t: "c", on: true, ic: "beam", text: "Vérification de la section" },
  { k: "f", g: ["line", "none", "tee"], t: "c", on: true, ic: "beam", text: "Vérification de la stabilité" },
  { k: "g", g: ["line", "none", "tee"], t: "c", on: true, ic: "beam", text: "Vérification de la soudure" },
  { k: "h", g: ["line", "none", "tee"], t: "c", on: true, ic: "beam", text: "Vérification de la pression" },
  { k: "i", g: ["line", "none", "end"], t: "c", on: true, ic: "beam", text: "Calcul plastique" },
  { k: "j", g: ["tee"], box: true, t: "c", on: true, ic: "beam", text: "Efforts internes du calcul de torsion de ga" },
  { k: "l", g: ["line", "tee"], t: "r", ic: "N", text: "N" },
  { k: "m", g: ["line", "tee"], t: "r", ic: "Vy", text: lower("V", "y") },
  { k: "n", g: ["line", "tee"], t: "r", ic: "Vz", text: lower("V", "z") },
  { k: "o", g: ["line", "tee"], t: "r", on: true, ic: "My", text: lower("M", "y") },
  { k: "p", g: ["line", "tee"], t: "r", ic: "Mz", text: lower("M", "z") },
  { k: "q", g: ["line", "tee"], t: "r", ic: "beam", text: "B" },
  { k: "r", g: ["line", "tee"], t: "r", ic: "MT", text: lower("T", "pri") },
  { k: "s", g: ["line", "end"], t: "r", ic: "MT", text: lower("T", "sec") },
  { k: "t", g: ["end"], box: true, t: "c", ic: "beam", text: "Contraintes du calcul de torsion de gauch" },
  { k: "u", g: ["none", "end"], t: "r", on: true, ic: "beam", text: lower("σ", "v") },
];

/* ---------- model view ---------- */

const Right = styled.div`
  display: grid;
  grid-template-rows: minmax(0, 1fr) 229px;
  row-gap: 6px;
  min-height: 0;
`;
const View = styled.section`
  position: relative;
  background: #fff;
  border: solid #696969;
  border-width: 1px 1px 0 2px;
  border-right-color: #e3e3e3;
  display: flex;
  flex-direction: column;
  justify-content: space-between;
  padding: 5px 4px 6px 3px;
  font: 11px/14px ${ARIAL};
`;
const Canvas = styled.svg`
  position: absolute;
  inset: 0;
  width: 100%;
  height: 100%;
`;
const Y = [253, 261, 267, 270, 272, 271, 269, 265, 259, 252, 244];
const px = (i: number) => 600.5 + i * 24.2;
const top = (i: number) => 195 + i * 1.4;
const Slab = ({ x, y }: { x: number; y: number }) => (
  <g>
    <path d={`M${x - 7} ${y + 10}l36 2 8-10v9l-8 10-36-2z`} fill="#7dff7d" />
    <path d={`M${x} ${y}l37 2-8 10-36-2z`} fill="#3cca3c" />
  </g>
);
const Triad = ({ x, y, xl }: { x: number; y: number; xl?: boolean }) => (
  <g>
    <path d={`M${x} ${y}l36 2`} stroke="#f00" strokeWidth="1.500" />
    <path d={`M${x + 31} ${y - 1}l8 3-8 3z`} fill="#d00" />
    <path d={`M${x} ${y}l-7 10`} stroke="#0e0" strokeWidth="1.500" />
    <circle cx={x - 6} cy={y + 9} r="3" fill="#0a9a0a" />
    <path d={`M${x} ${y}v34`} stroke="#00f" strokeWidth="1.500" />
    <path d={`M${x - 3} ${y + 29}h6l-3 11z`} fill="#0000a0" />
    <text x={x - 10} y={y + 18} fill="#0e0" fontSize="9" textAnchor="middle">Y</text>
    <text x={x} y={y + 52} fill="#00f" fontSize="9" textAnchor="middle">Z</text>
    {xl && <text x={x + 49} y={y + 7} fill="#f00" fontSize="9" textAnchor="middle">X</text>}
  </g>
);
const ModelView = () => (
  <View>
    <div>
      <p>Calcul de torsion de gauchissement Efforts internes M-y [kNm]</p>
      <p>STEEL EC3 CA1 - Vérification selon l'Eurocode</p>
    </div>
    <Canvas aria-label="Diagramme des moments">
      <g transform="translate(-292 -101)">
        <Slab x={343} y={176} />
        <Slab x={1070} y={216} />
        <path d="M600.500 182l242.500 13v27l-242.500-13zM600.500 186l242.500 13M600.500 206l242.500 13" fill="none" stroke="#b0b0b0" strokeDasharray="1 1" />
        <path d="M358 182L1085 222" stroke="#000" strokeWidth="1.800" />
        {Y.map((y, i) => <path key={i} d={`M${px(i)} ${top(i)}V${y}`} stroke={i % 2 ? "#1818e0" : "#8484f4"} />)}
        <path d={"M" + Y.map((y, i) => `${px(i)} ${y}`).join("L")} fill="none" stroke="#2020f0" strokeDasharray="4 1" />
        {[0, 4, 10].map((i) => <circle key={i} cx={px(i)} cy={Y[i]} r="1.600" fill="#00d" />)}
        <g fill="#a02040"><circle cx="600.500" cy="195" r="1.800" /><circle cx="843" cy="209" r="1.800" /><circle cx="1085" cy="222" r="1.800" /></g>
        <g fill="#0000e0" fontSize="9" textAnchor="middle">
          <text x="600" y="266">15.59</text><text x="697" y="285">19.25</text><text x="843" y="258">9.41</text>
        </g>
        <Triad x={358} y={182} xl />
        <Triad x={346} y={783} />
      </g>
    </Canvas>
    <p>Max Efforts i</p>
  </View>
);

/* ---------- node table ---------- */

const Nodes = styled.section`
  display: grid;
  grid-template-rows: 19px 25px 149px 36px;
  min-height: 0;
`;
const TableTools = styled.div`
  display: flex;
  align-items: flex-start;
  padding-left: 8px;
  background: linear-gradient(#e8ecf6, #c9cedb);
`;
const TableFrame = styled.div`
  display: flex;
  align-items: flex-start;
  background: #f0f0f0;
  border: 1px solid #696969;
  border-bottom: 2px solid #696969;
  padding: 2px 2px 0 1px;
`;
const Sheet = styled.table`
  flex: 1;
  border-collapse: collapse;
  table-layout: fixed;
  background: #fff;
  font: 11px/15px ${UI};
  th, td { font-weight: 400; padding: 0; border: 1px solid #a0a0a0; text-align: center; }
  tr { height: 16px; }
  td { border-left: 0; border-right: 0; }
`;
const HeadCell = styled.th<{ $w?: number; $tone?: string }>`
  ${(p) => p.$w && `width: ${p.$w}px;`}
  background: ${(p) => p.$tone ?? "#e1e1e1"};
  border-color: #696969 !important;
`;
const RowHead = styled.th<{ $on?: boolean }>`
  border-color: #696969 !important;
  background: ${(p) => (p.$on ? "#3399ff" : "#e1e1e1")};
  color: ${(p) => (p.$on ? "#fff" : "#000")};
`;
const ShortRow = styled.tr`height: 14px !important;`;
const TallRow = styled.tr`height: 32px !important; th { background: #f0f0f0; }`;
const VBar = styled.div`
  height: 126px;
  display: flex;
  margin-left: 1px;
`;
const SheetTabs = styled.div`
  display: flex;
  background: #f0f0f0;
  border-left: 1px solid #696969;
`;
const SheetTab = styled.button<{ $on?: boolean }>`
  height: 17px;
  border: 1px solid #696969;
  border-top-width: ${(p) => (p.$on ? 0 : 1)}px;
  border-left-width: ${(p) => (p.$on ? 0 : 1)}px;
  border-radius: 0 0 4px 4px;
  background: #f0f0f0;
  padding: 0 5px 0 3px;
`;

/* ---------- shared dialog parts ---------- */

const Win = styled.section<{ $x: number; $y: number; $w: number; $h: number; $active?: boolean }>`
  position: absolute;
  left: ${(p) => p.$x}px;
  top: ${(p) => p.$y}px;
  width: ${(p) => p.$w}px;
  height: ${(p) => p.$h}px;
  display: flex;
  flex-direction: column;
  background: #f0f0f0;
  border: 1px solid ${(p) => (p.$active ? "#27a4f2" : "#a0a0a0")};
  box-shadow: ${(p) => (p.$active ? "0 8px 20px rgba(0,0,0,.45)" : "0 4px 14px rgba(0,0,0,.4)")};
  font: 11px/13px ${DLG};
`;
const WinTitle = styled.h2<{ $active?: boolean }>`
  height: 25px;
  flex: none;
  display: flex;
  align-items: center;
  justify-content: space-between;
  padding: 0 9px 2px 3px;
  font: 11px/16px ${UI};
  background: ${(p) => (p.$active ? "#27a4f2" : "#fff")};
  color: ${(p) => (p.$active ? "#000" : "#999")};
`;
const Group = styled.fieldset<{ $h?: number }>`
  min-width: 0;
  margin: 0;
  padding: 0;
  ${(p) => p.$h && `height: ${p.$h}px;`}
  display: flex;
  flex-direction: column;
  border: solid #a6a4ea;
  border-width: 0 1px 1px 0;
  box-shadow: inset 1px 0 #dce6f4;
  background: #f0f4fa;
`;
const Cut = styled(Group)`
  clip-path: polygon(0 0, calc(100% - 8px) 0, 100% 10px, 100% 100%, 0 100%);
`;
const Blank = styled(Group)`
  border-top: 1px solid #dce6f4;
`;
const GroupTitle = styled.h3`
  height: 17px;
  flex: none;
  padding: 0 2px;
  background: #dce6f4;
  border-bottom: 1px solid #fff;
  color: #1f4a73;
  font: 11px/16px ${ARIAL};
  white-space: nowrap;
`;
const Push = styled.button<{ $w?: number; $def?: boolean }>`
  width: ${(p) => p.$w ?? 25}px;
  height: 21px;
  flex: none;
  display: grid;
  place-items: center;
  border: ${(p) => (p.$def ? "2px solid #0078d7" : "1px solid #adadad")};
  background: #e1e1e1;
  white-space: nowrap;
  &:disabled { background: #cccccc; color: #838383; border-color: #bfbfbf; }
`;
const Tabs = styled.div<{ $inset?: number }>`
  display: flex;
  align-items: flex-end;
  height: 21px;
  flex: none;
  padding-left: ${(p) => p.$inset ?? 0}px;
  margin-bottom: -1px;
`;
const Tab = styled.button<{ $on?: boolean; $pad?: number }>`
  height: ${(p) => (p.$on ? 21 : 18)}px;
  margin: ${(p) => (p.$on ? "0" : "0 -1px 1px 0")};
  padding: 0 ${(p) => p.$pad ?? 5}px;
  border: 1px solid #dcdcdc;
  border-bottom-width: 0;
  background: ${(p) => (p.$on ? "#fff" : "#f0f0f0")};
  white-space: nowrap;
  z-index: ${(p) => (p.$on ? 1 : 0)};
`;

/* ---------- STEEL EC3 window ---------- */

const DlgMenu = styled.nav`
  height: 18px;
  flex: none;
  display: flex;
  background: #fff;
  color: #6a6a6a;
  font-family: ${UI};
`;
const DlgBody = styled.div`
  flex: 1;
  min-height: 0;
  display: grid;
  grid-template-columns: 176px minmax(0, 1fr);
  column-gap: 2px;
  padding-top: 3px;
`;
const DlgSide = styled.div`
  display: flex;
  flex-direction: column;
  min-height: 0;
  border: solid #a0a0a0;
  border-width: 2px 1px 1px 2px;
  padding: 2px 1px 0 0;
  background: #fff;
`;
const CaseSelect = styled.label`
  display: flex;
  align-items: center;
  height: 21px;
  flex: none;
  margin-bottom: 1px;
  padding: 0 4px 0 2px;
  border: 1px solid #adadad;
  background: #e1e1e1;
`;
const DlgTree = styled.ul`
  flex: 1;
  min-height: 0;
  border-top: 1px solid #828282;
  background: #fbfbf3;
  padding: 0 0 0 3px;
  overflow: hidden;
`;
const DlgRow = styled.li`
  display: flex;
  align-items: center;
  height: 16px;
  white-space: pre;
  overflow: hidden;
`;
const DlgItem = styled.span<{ $on?: boolean }>`
  line-height: 15px;
  padding: 0 2px 0 1px;
  ${(p) => p.$on && "background: #efeff2;"}
`;
const DlgMain = styled.div`
  display: flex;
  flex-direction: column;
  min-height: 0;
  border: solid #a0a0a0;
  border-width: 2px 0 1px 0;
  padding-top: 2px;
`;
const PageTitle = styled.h3`
  height: 20px;
  flex: none;
  padding: 0 3px;
  background: #becbd8;
  font: 11px/20px ${UI};
`;
const Content = styled.div`
  flex: 1;
  min-height: 0;
  display: grid;
  grid-template-columns: minmax(0, 1fr) 204px;
  column-gap: 8px;
  padding: 9px 2px 0 9px;
`;
const Column = styled.div`
  display: flex;
  flex-direction: column;
  min-height: 0;
`;
const PickGrid = styled.div`
  display: grid;
  grid-template-columns: 59px 253px 25px 25px 25px auto;
  grid-auto-rows: 21px;
  gap: 4px 5px;
  align-items: center;
  justify-content: start;
  padding: 3px 2px 0;
  white-space: nowrap;
`;
const TextBox = styled.input`
  width: 100%;
  height: 20px;
  border: 1px solid #7a7a7a;
  background: #fff;
  padding: 0 6px;
`;
const CheckLabel = styled.label`
  display: flex;
  align-items: center;
  gap: 3px;
  margin-left: 9px;
`;
const TabPane = styled.div<{ $pad: string }>`
  flex: 1;
  min-height: 0;
  background: #fff;
  border: 1px solid #dcdcdc;
  padding: ${(p) => p.$pad};
  display: grid;
`;
const CasePane = styled(TabPane)`
  grid-template-columns: 266px 25px minmax(0, 1fr);
  column-gap: 7px;
  margin-top: 0;
`;
const CaseList = styled.ul`
  flex: 1;
  margin-right: 1px;
  border: solid #a0a0a0;
  border-width: 1px 0 0 1px;
  background: linear-gradient(#a0a0a0, #a0a0a0) 71px 0 / 1px 100% no-repeat, linear-gradient(#f0f0f0, #f0f0f0) 0 0 / 100% 16px no-repeat, #e8eeee;
`;
const CaseTitle = styled(GroupTitle)`
  height: 16px;
  border-bottom: 0;
`;
const CaseItem = styled.li`
  display: flex;
  align-items: center;
  gap: 4px;
  height: 15px;
  padding-left: 1px;
`;
const Badge = styled.span`
  width: 25px;
  height: 11px;
  background: #1c181a;
  color: #fff;
  text-align: center;
  font: 9px/11px ${UI};
`;
const ListFoot = styled.div`
  height: 28px;
  flex: none;
  display: flex;
  align-items: center;
  gap: 4px;
  padding: 0 3px 1px;
`;
const FilterBox = styled.label`
  flex: 1;
  height: 21px;
  display: flex;
  align-items: center;
  gap: 4px;
  padding: 0 4px 0 3px;
  border: 1px solid #7a7a7a;
  background: #fff;
`;
const Swatch = styled.span`
  width: 25px;
  height: 11px;
  background: #d9d9d9;
`;
const Movers = styled.div`
  display: flex;
  flex-direction: column;
  gap: 5px;
  padding-top: 128px;
  button:nth-child(3) { margin-top: 24px; }
`;
const NotesRow = styled.div`
  display: grid;
  grid-template-columns: 449px minmax(0, 1fr);
  column-gap: 7px;
  height: 64px;
  flex: none;
  margin: 11px 0 9px;
`;
const NoteBox = styled.div`
  display: flex;
  flex: 1;
  margin: 1px 4px 4px 2px;
  border: solid #828282;
  border-width: 1px 0 0 1px;
  background: #fff;
`;
const NoteArea = styled.textarea`
  flex: 1;
  border: 0;
  background: none;
  resize: none;
  outline: 0;
`;
const Banner = styled.div`
  margin-bottom: 2px;
  border: solid #888;
  border-width: 0 1px 0 1px;
  background:
    linear-gradient(#2a2f7c, #2a2f7c) 70px calc(100% - 32px) / 101px 20px no-repeat,
    linear-gradient(rgba(255,255,255,0) calc(100% - 30px), rgba(255,255,255,.7)),
    repeating-linear-gradient(90deg, rgba(255,255,255,.5) 0 3px, transparent 3px 6px) 0 0 / 28px 100% no-repeat,
    linear-gradient(90deg, #c4c6c8 0 28px, #c3d6e0 50px, #d2dede 80px, #d3dc98 88px, #dde2ac 150px, #ccd48c);
`;
const ButtonBar = styled.div`
  height: 39px;
  flex: none;
  display: flex;
  align-items: center;
  gap: 9px;
  padding: 4px 10px 0 8px;
`;
const Spacer = styled.span<{ $w?: number; $h?: number }>`
  width: ${(p) => p.$w ?? 1}px;
  height: ${(p) => p.$h ?? 1}px;
  flex: none;
`;
const StatusLine = styled.div`
  height: 21px;
  flex: none;
  border-top: 1px solid #a0a0a0;
  border-bottom: 1px solid #fff;
`;

type Row = { g: Guide[]; box?: boolean; text: string; on?: boolean };
const ROWS: Row[] = [
  { g: [], text: "Données d'entrée" },
  { g: ["tee"], text: "Données de base", on: true },
  { g: ["tee"], text: "Matériaux" },
  { g: ["tee"], text: "Sections" },
  { g: ["tee"], text: "Maintiens latéraux intermédiaire" },
  { g: ["tee"], box: true, text: "Appuis nodaux" },
  { g: ["line", "end"], text: "Ensemble de barres n° 1 - S" },
  { g: ["tee"], box: true, text: "Articulations de barre" },
  { g: ["line", "end"], text: "Ensemble de barres n° 1 - S" },
  { g: ["end"], text: "Paramètres - Ensembles de bar" },
  { g: [], text: "Résultats" },
  { g: ["tee"], text: "Vérification par cas de charge" },
  { g: ["tee"], text: "Vérification par section" },
  { g: ["tee"], text: "Vérification par ensemble de ba" },
  { g: ["tee"], text: "Vérification par barre" },
  { g: ["tee"], text: "Vérification par position x" },
  { g: ["tee"], text: "Efforts internes déterminants p" },
  { g: ["tee"], text: "Efforts internes déterminants p" },
  { g: ["end"], text: "Liste de pièces  par ensemble d" },
];

const SteelWindow = () => (
  <Win $x={358} $y={349} $w={1085} $h={774}>
    <WinTitle>STEEL EC3 - [001417-model-file]</WinTitle>
    <DlgMenu>
      {["Fichier", "Modifier", "Paramètres", "Aide"].map((m) => <MenuItem key={m}>{m}</MenuItem>)}
    </DlgMenu>
    <DlgBody>
      <DlgSide>
        <CaseSelect>
          <BareSelect aria-label="Cas de calcul"><option>CA1 - Vérification selon l'Euroco</option></BareSelect>
          <Chevron dir="d" w={1} />
        </CaseSelect>
        <DlgTree>
          {ROWS.map((r, i) => (
            <DlgRow key={i}>
              <Guides spec={r.g} box={r.box} />
              <DlgItem $on={r.on}>{r.text}</DlgItem>
            </DlgRow>
          ))}
        </DlgTree>
        <Scroll thumb={60} />
      </DlgSide>
      <DlgMain>
        <PageTitle>1.1 Données de base</PageTitle>
        <Content>
          <Column>
            <Group $h={73}>
              <GroupTitle>Vérification de</GroupTitle>
              <PickGrid>
                <label htmlFor="barres">Barres :</label>
                <TextBox id="barres" />
                <Push aria-label="Sélectionner les barres"><Icon name="pick" /></Push>
                <Push aria-label="Effacer les barres"><Icon name="del" /></Push>
                <span />
                <CheckLabel><Box />Toutes</CheckLabel>
                <label htmlFor="ens">Ensembles :</label>
                <TextBox id="ens" defaultValue="1" />
                <Push aria-label="Sélectionner les ensembles"><Icon name="pick" /></Push>
                <Push aria-label="Effacer les ensembles"><Icon name="del" /></Push>
                <Push aria-label="Nouvel ensemble"><Icon name="new-win" /></Push>
                <CheckLabel><Box />Tous</CheckLabel>
              </PickGrid>
            </Group>
            <Spacer $h={10} />
            <Tabs role="tablist">
              <Tab $on $pad={7} role="tab">État limite ultime</Tab>
              <Tab role="tab">État limite de service</Tab>
              <Tab role="tab">Résistance au feu</Tab>
            </Tabs>
            <CasePane $pad="7px 3px 5px">
              <Cut>
                <CaseTitle>Cas de charge et combinaisons existants</CaseTitle>
                <CaseList><CaseItem><Badge>Gq</Badge>CC2</CaseItem></CaseList>
                <ListFoot>
                  <FilterBox>
                    <Swatch />
                    <BareSelect aria-label="Filtre"><option>Tout (2)</option></BareSelect>
                    <Chevron dir="d" w={1} />
                  </FilterBox>
                  <Push aria-label="Tout sélectionner"><Icon name="check-all" /></Push>
                  <Push aria-label="Inverser la sélection"><Icon name="check-inv" /></Push>
                </ListFoot>
              </Cut>
              <Movers>
                <Push disabled aria-label="Ajouter"><Icon name="right" /></Push>
                <Push aria-label="Tout ajouter"><Icon name="rights" /></Push>
                <Push disabled aria-label="Retirer"><Icon name="left" /></Push>
                <Push aria-label="Tout retirer"><Icon name="lefts" /></Push>
              </Movers>
              <Cut>
                <CaseTitle>Sélectionné pour le calcul</CaseTitle>
                <CaseList><CaseItem><Badge>G</Badge>CC1</CaseItem></CaseList>
                <ListFoot />
              </Cut>
            </CasePane>
            <NotesRow>
              <Cut>
                <GroupTitle as="label" htmlFor="note">Commentaire</GroupTitle>
                <NoteBox><NoteArea id="note" /><Scroll v thumb={0} dim /></NoteBox>
              </Cut>
              <Blank />
            </NotesRow>
          </Column>
          <Banner />
        </Content>
      </DlgMain>
    </DlgBody>
    <ButtonBar>
      <Push aria-label="Aide"><Icon name="question" /></Push>
      <Push aria-label="Précédent"><Icon name="win-prev" /></Push>
      <Push aria-label="Suivant"><Icon name="win-next" /></Push>
      <Spacer $w={60} />
      <Push $w={81} disabled>Calcul</Push>
      <Push $w={81}>Détails...</Push>
      <Push $w={81}>Annexe Nat. ...</Push>
      <Spacer $w={81} />
      <Push $w={81}>Graphique</Push>
      <Grow />
      <Push $w={73}>OK</Push>
      <Push $w={73}>Annuler</Push>
    </ButtonBar>
    <StatusLine />
  </Win>
);

/* ---------- Détails window ---------- */

const DetailBody = styled.div`
  flex: 1;
  min-height: 0;
  display: flex;
  flex-direction: column;
  padding: 8px 9px 0 8px;
`;
const DetailPane = styled(TabPane)`
  grid-template-columns: 1fr 1fr;
  column-gap: 8px;
`;
const Stack = styled.div`
  display: grid;
  grid-template-rows: 69px 71px 69px 106px minmax(0, 1fr);
  row-gap: 9px;
`;
const Inner = styled.div<{ $top: number; $gap?: number }>`
  display: flex;
  flex-direction: column;
  gap: ${(p) => p.$gap ?? 0}px;
  padding: ${(p) => p.$top}px 3px 0;
`;
const Option = styled.label`
  display: flex;
  align-items: flex-start;
  gap: 3px;
`;
const SpinRow = styled.div`
  display: flex;
  align-items: center;
  padding: 6px 2px 0;
  label { width: 188px; }
`;
const SpinBox = styled.div`
  display: flex;
  height: 20px;
`;
const SpinInput = styled.input`
  width: 57px;
  border: 1px solid #0078d7;
  border-right-width: 0;
  color: #fff;
  text-align: right;
  padding-right: 3px;
  outline: 0;
  background: linear-gradient(#0078d7, #0078d7) calc(100% - 2px) 2px / 20px 14px no-repeat, #fff;
`;
const SpinButtons = styled.div`
  width: 17px;
  display: grid;
  grid-template-rows: 1fr 1fr;
  border: 1px solid #adadad;
  button { border: 1px solid #bbb; background: #f0f0f0; display: grid; place-items: center; }
`;
const LoadRow = styled.div`
  display: flex;
  gap: 34px;
  padding: 7px 3px 0;
`;
const RadioGrid = styled.div`
  display: grid;
  grid-template-columns: repeat(3, 13px);
  grid-auto-rows: 13px;
  gap: 9px 10px;
  padding-top: 3px;
`;
const Picture = styled.svg`
  border: solid #8c8c8c;
  border-width: 1px 0 0 1px;
  background: linear-gradient(90deg, #fff, #fef6dc);
`;
const DetailFoot = styled.div`
  display: flex;
  align-items: center;
  gap: 9px;
  padding: 10px 0 9px 1px;
`;
const Nested = styled.div`
  display: flex;
  gap: 5px;
`;
const DTABS = ["État limite ultime", "Stabilité", "État limite de service", "Résistance au feu", "Torsion de gauchissement", "Plasticité", "Général"];

const Section = () => (
  <Picture width="98" height="68" viewBox="0 0 98 68" role="img" aria-label="Section en I">
    <path d="M27 6h43v3.500H56c-3 0-4 1.500-4 4v41c0 2.500 1 4 4 4h14V62H27v-3.500h13c3 0 4-1.500 4-4v-41c0-2.500-1-4-4-4H27z" fill="#e2e2e2" stroke="#666" strokeWidth="1.300" />
    <path d="M49 34h12" stroke="#109848" strokeWidth="1.500" /><path d="M59 31l6 3-6 3z" fill="#109848" />
    <path d="M48.500 34v12" stroke="#3a3a9c" strokeWidth="1.500" /><path d="M46 45h5l-2.500 6z" fill="#3a3a9c" />
    <g fill="#808080">{[27, 48, 70].map((x) => [6, 34, 62].map((y) => <circle key={`${x}-${y}`} cx={x} cy={y} r="2" />))}</g>
    <circle cx="48" cy="6" r="2.300" fill="#e81c1c" />
    <g fontFamily="Liberation Sans, sans-serif" fontSize="9" fontWeight="700" textAnchor="middle">
      <text x="65" y="31" fill="#109848">Y</text><text x="57" y="54" fill="#3a3a9c">Z</text>
    </g>
  </Picture>
);

const DetailsWindow = () => (
  <Win $x={1013} $y={332} $w={718} $h={693} $active>
    <WinTitle $active>Détails<PlainBtn aria-label="Fermer"><Cross c="#000" s={11} /></PlainBtn></WinTitle>
    <DetailBody>
      <Tabs $inset={2} role="tablist">
        {DTABS.map((t) => <Tab key={t} role="tab" $on={t.startsWith("Torsion")} $pad={t.startsWith("Torsion") ? 7 : 5}>{t}</Tab>)}
      </Tabs>
      <DetailPane $pad="8px 7px 7px 8px">
        <Stack>
          <Cut>
            <GroupTitle>STEEL Warping Torsion</GroupTitle>
            <Inner $top={7}>
              <Option><Box defaultChecked /><span>Effectuer l'analyse de gauchissement (7 degrés de liberté)<br />(disponible pour les ensembles de barres uniquement)</span></Option>
            </Inner>
          </Cut>
          <Cut>
            <GroupTitle>Méthode d'analyse de gauchissement</GroupTitle>
            <Inner $top={5} $gap={8}>
              <Option><Radio name="methode" />Analyse de second ordre</Option>
              <Option><Radio name="methode" defaultChecked />Linéaire</Option>
            </Inner>
          </Cut>
          <Cut>
            <GroupTitle>Paramètres spéciaux</GroupTitle>
            <SpinRow>
              <label htmlFor="iter">Nombre maximal d'itérations :</label>
              <SpinBox>
                <SpinInput id="iter" defaultValue="100" />
                <SpinButtons>
                  <button aria-label="Plus"><Svg width="5" height="3" viewBox="0 0 5 3"><path d="M0 3h5L2.500 0z" /></Svg></button>
                  <button aria-label="Moins"><Svg width="5" height="3" viewBox="0 0 5 3"><path d="M0 0h5L2.500 3z" /></Svg></button>
                </SpinButtons>
              </SpinBox>
            </SpinRow>
          </Cut>
          <Cut>
            <GroupTitle>Application de charge</GroupTitle>
            <LoadRow>
              <RadioGrid role="radiogroup" aria-label="Point d'application">
                {Array.from({ length: 9 }, (_, i) => <Radio key={i} name="point" defaultChecked={i === 1} aria-label={`Point ${i + 1}`} />)}
              </RadioGrid>
              <Section />
            </LoadRow>
          </Cut>
          <Blank />
        </Stack>
        <Blank />
      </DetailPane>
      <DetailFoot>
        <Push aria-label="Aide"><Icon name="question" /></Push>
        <Push aria-label="Unités"><Icon name="units" /></Push>
        <Push aria-label="Réinitialiser"><Icon name="reset" /></Push>
        <Nested>
          <Push aria-label="Charger"><Icon name="jar-load" /></Push>
          <Push aria-label="Enregistrer"><Icon name="jar-save" /></Push>
        </Nested>
        <Grow />
        <Push $w={73} $def>OK</Push>
        <Push $w={73}>Annuler</Push>
      </DetailFoot>
    </DetailBody>
  </Win>
);

/* ---------- status bar ---------- */

const Status = styled.footer`
  display: flex;
  align-items: center;
  gap: 2px;
  border-top: 1px solid #a4a9b4;
  background: linear-gradient(#e2e5ea, #c0c5cf 30%, #a9aeb8 50%, #b4b9c3);
  color: #333;
`;
const Flag = styled.button<{ $up?: boolean; $w: number }>`
  width: ${(p) => p.$w}px;
  height: 18px;
  flex: none;
  border: 1px solid;
  border-color: ${(p) => (p.$up ? "#f4f4f4 #8c8c8c #8c8c8c #f4f4f4" : "#000 #f4f4f4 #f4f4f4 #000")};
  background: none;
  font: 11px/15px ${UI};
  display: grid;
  place-items: center;
  white-space: nowrap;
`;
const StatusCells = styled.div`
  display: grid;
  grid-template-columns: 153px 88px 74px 74px 72px;
  align-self: stretch;
  line-height: 20px;
  span + span { border-left: 1px solid #8f959f; }
`;

const menu: ReactNode[] = [
  <>Fic<u>h</u>ier</>, <><u>M</u>odifier</>, <>Aff<u>i</u>cher</>, <>I<u>n</u>sérer</>, <><u>C</u>alculer</>, <><u>R</u>ésultats</>,
  <><u>O</u>utils</>, <><u>T</u>ableau</>, <>O<u>p</u>tions</>, <>Mod<u>u</u>les additionnels</>, <><u>F</u>enêtre</>, <>Ai<u>d</u>e</>,
];

export default function App() {
  return (
    <>
      <Global />
      <Shell>
        <TitleBar>
          <Icon name="app" />
          <h1>RSTAB 8.13.01 x64 - [001417-model-file*]</h1>
          <Grow />
          <Captions>
            <CaptionButton aria-label="Réduire"><Svg width="11" height="11"><path d="M0 5.500h11" stroke="#000" /></Svg></CaptionButton>
            <CaptionButton aria-label="Restaurer"><Svg width="11" height="11"><path d="M.5 2.500h8v8h-8zM2.500 2.500v-2h8v8h-2" fill="none" stroke="#000" /></Svg></CaptionButton>
            <CaptionButton aria-label="Fermer"><Cross c="#000" s={11} /></CaptionButton>
          </Captions>
        </TitleBar>
        <MenuBar>
          <Grip />
          <Icon name="doc" />
          <Spacer $w={1} />
          {menu.map((m, i) => <MenuItem key={i}>{m}</MenuItem>)}
          <Grow />
          <MdiControls>
            <CaptionButton aria-label="Réduire le document"><Svg width="8" height="9"><path d="M0 7h7" stroke="#666" strokeWidth="2" /><path d="M1 8.500h7" stroke="#fff" /></Svg></CaptionButton>
            <CaptionButton aria-label="Restaurer le document"><Svg width="10" height="9"><path d="M.5 3h6v4h-6zM2 2V.8h7V5H7" fill="none" stroke="#777" /></Svg></CaptionButton>
            <CaptionButton aria-label="Fermer le document"><Svg width="10" height="9"><path d="M1 1l7 7M8 1L1 8" stroke="#777" strokeWidth="1.800" /></Svg></CaptionButton>
          </MdiControls>
        </MenuBar>
        <ToolRow>
          <Tools items="new open open-model save-model save report print preview | undo redo | sel-rhomb sel-circle sel-ring sel-rect sel-win | *list *table | new-load combo prev next eye-gray xxx-gray *eye *xxx | glasses abacus-win abacus" />
          <Tools items="hand-grid snap plane-xy plane-yz *plane-xz mesh axis-win | move rotate mirror cross info settings gears" />
          <Tools items="cad-in cad-out scia-in scia-out" />
        </ToolRow>
        <ToolRow>
          <Tools items="node v member member-set member-i support release | load-node load-mem load-imp load-def | dim v comment | guide | select v" />
          <Tools items="pan zoom zoom-x cube boxes | ax-x ax-y ax-z ax-mx v render v | clip v" />
          <Tools dimForces items="deform roll | ~beam N Vy Vz MT My Mz py pz | reaction section values | panel" />
        </ToolRow>
        <Work>
          <Side>
            <PaneHeader>
              <span>Navigateur de projet - Résultats</span><Grow />
              <PlainBtn aria-label="Épingler"><Pin /></PlainBtn><PlainBtn aria-label="Fermer"><Cross /></PlainBtn>
            </PaneHeader>
            <SideTree>
              <TreeList>
                {NAV.map((n) => (
                  <NavRow key={n.k}>
                    <Guides spec={n.g} box={n.box} />
                    <NavLabel>
                      {n.t === "c" ? <Box $nav defaultChecked={n.on} /> : <Radio $nav name={n.k === "u" ? "sigma" : "effort"} defaultChecked={n.on} />}
                      <Icon name={n.ic} />
                      {n.text}
                    </NavLabel>
                  </NavRow>
                ))}
              </TreeList>
              <Scroll thumb={80} />
            </SideTree>
            <SideTabs>
              <SideTab><Icon name="data" />Données</SideTab>
              <SideTab><Icon name="display" />Afficher</SideTab>
              <SideTab><Icon name="views" />Vues</SideTab>
              <SideTab $on><Icon name="results" size={14} />Résultats</SideTab>
            </SideTabs>
          </Side>
          <Right>
            <ModelView />
            <Nodes>
              <PaneHeader>
                <span>1.1 Nœuds</span><Grow />
                <PlainBtn aria-label="Épingler"><Pin /></PlainBtn><PlainBtn aria-label="Fermer"><Cross /></PlainBtn>
              </PaneHeader>
              <TableTools>
                <ToolButton $on aria-label="Éditer"><Icon name="t-edit" /></ToolButton>
                <ToolButton aria-label="Insérer"><Icon name="t-plus" /></ToolButton>
                <ToolButton aria-label="Descendre"><Icon name="t-down" /></ToolButton>
              </TableTools>
              <TableFrame>
                <Sheet>
                  <thead>
                    <ShortRow>
                      <HeadCell rowSpan={2} $w={45}>Nœud<br />n°</HeadCell>
                      <HeadCell $w={72} $tone="#3399ff" />
                      <HeadCell />
                    </ShortRow>
                    <TallRow><th>Nœud de<br />référence</th><th /></TallRow>
                  </thead>
                  <tbody>
                    {[1, 2, 3, 4, 5].map((n) => <tr key={n}><RowHead $on={n === 1}>{n}</RowHead><td /><td /></tr>)}
                  </tbody>
                </Sheet>
                <VBar><Scroll v thumb={71} /></VBar>
              </TableFrame>
              <SheetTabs>
                <SheetTab $on>Nœuds</SheetTab>
                <SheetTab>Matériaux</SheetTab>
              </SheetTabs>
            </Nodes>
          </Right>
        </Work>
        <Status>
          <Grow />
          <Flag $w={39}>SAISIE</Flag>
          <Flag $w={42} $up>GRILLE</Flag>
          <Flag $w={56}>CARTES</Flag>
          <Flag $w={72}>SAISIE D'OB.</Flag>
          <Flag $w={52}>GLIGNES</Flag>
          <Flag $w={28}>DXF</Flag>
          <StatusCells><span>Mode de visil</span><span /><span /><span /><span /></StatusCells>
        </Status>
        <SteelWindow />
        <DetailsWindow />
      </Shell>
    </>
  );
}
